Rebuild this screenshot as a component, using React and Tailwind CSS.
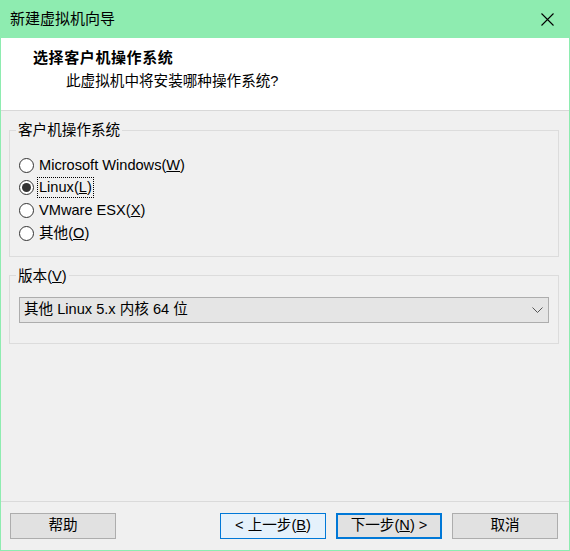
import React from 'react';

const FONT = { fontFamily: '"Liberation Sans", "Noto Sans CJK SC", sans-serif' };

const Radio = ({ checked, children, focused }) => (
    <div className="flex h-[22.67px] items-center">
        <span className="flex h-[15px] w-[15px] shrink-0 items-center justify-center rounded-full border border-[#333333] bg-white">
            {checked && <span className="h-[9px] w-[9px] rounded-full bg-[#333333]" />}
        </span>
        <span
            className={
                focused
                    ? 'ml-[3px] border border-dotted border-black px-[1px] leading-[19px]'
                    : 'ml-[5px] leading-[19px]'
            }
        >
            {children}
        </span>
    </div>
);

const Btn = ({ children, variant }) => {
    const cls =
        variant === 'hover'
            ? 'border border-[#0078d7] bg-[#e5f1fb]'
            : variant === 'default'
            ? 'border-2 border-[#0078d7] bg-[#e1e1e1]'
            : 'border border-[#adadad] bg-[#e1e1e1]';
    return (
        <button className={`flex h-[26px] w-[106px] items-center justify-center text-[14.6px] text-black ${cls}`}>
            {children}
        </button>
    );
};

export default function App() {
    return (
        <div
            className="flex h-[551px] w-[570px] flex-col border-x border-b border-[#8eecb0] bg-[#f0f0f0] text-[14.6px] text-black"
            style={FONT}
        >
            {/* title bar */}
            <div className="-mx-px flex h-[38px] shrink-0 items-center justify-between bg-[#8eecb0] pl-[10px] pr-[16px]">
                <span className="text-[15px]">新建虚拟机向导</span>
                <svg width="13" height="13" viewBox="0 0 13 13" fill="none" stroke="#000" strokeWidth="1.1">
                    <path d="M0.5 0.5 L12.5 12.5 M12.5 0.5 L0.5 12.5" />
                </svg>
            </div>

            {/* header */}
            <div className="h-[73px] shrink-0 border-b border-[#d8d8d8] bg-white pt-[10px]">
                <div className="pl-[32px] text-[15px] font-bold leading-[20px] tracking-[0.6px]">选择客户机操作系统</div>
                <div className="mt-[3px] pl-[65px] leading-[20px]">此虚拟机中将安装哪种操作系统?</div>
            </div>

            {/* body */}
            <div className="flex flex-1 flex-col pl-[8px] pr-[10px] pt-[9px]">
                <fieldset className="border border-[#dcdcdc] px-[9px] pb-[11px]">
                    <legend className="-ml-[3px] px-[2px] leading-[20px]">客户机操作系统</legend>
                    <div className="pt-[14px]">
                        <Radio>
                            Microsoft Windows(<u>W</u>)
                        </Radio>
                        <Radio checked focused>
                            Linux(<u>L</u>)
                        </Radio>
                        <Radio>
                            VMware ESX(<u>X</u>)
                        </Radio>
                        <Radio>
                            其他(<u>O</u>)
                        </Radio>
                    </div>
                </fieldset>

                <fieldset className="mt-[9px] border border-[#dcdcdc] px-[9px] pb-[20px]">
                    <legend className="-ml-[3px] px-[2px] leading-[20px]">
                        版本(<u>V</u>)
                    </legend>
                    <div className="mt-[11px] flex h-[26px] items-center justify-between border border-[#adadad] bg-[#e5e5e5] pl-[4px] pr-[5px]">
                        <span>其他 Linux 5.x 内核 64 位</span>
                        <svg width="11" height="6" viewBox="0 0 11 6" fill="none" stroke="#555" strokeWidth="1">
                            <path d="M0.5 0.5 L5.5 5.5 L10.5 0.5" />
                        </svg>
                    </div>
                </fieldset>
            </div>

            {/* footer */}
            <div className="flex h-[49px] shrink-0 items-start border-t border-[#dadada] pl-[9px] pr-[11px] pt-[11px]">
                <Btn>帮助</Btn>
                <div className="ml-auto flex gap-[10px]">
                    <Btn variant="hover">
                        &lt; 上一步(<u>B</u>)
                    </Btn>
                    <Btn variant="default">
                        下一步(<u>N</u>) &gt;
                    </Btn>
                    <Btn>取消</Btn>
                </div>
            </div>
        </div>
    );
}
